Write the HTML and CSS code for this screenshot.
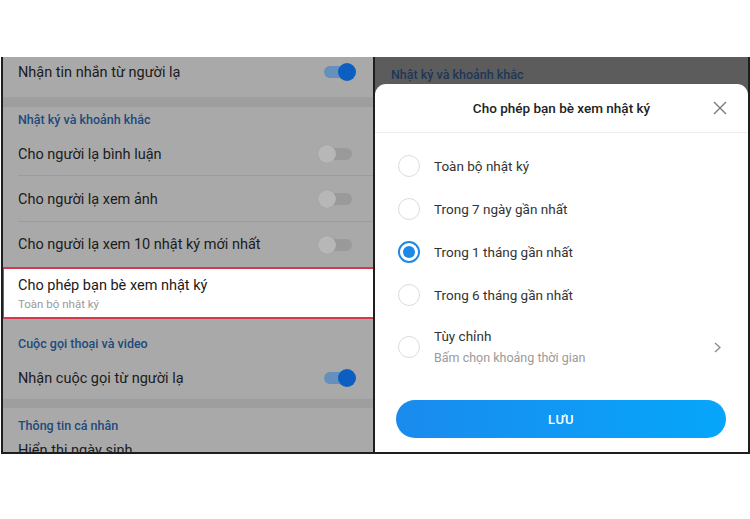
FILE: index.html
```html
<!DOCTYPE html>
<html lang="vi">
<head>
<meta charset="utf-8">
<title>Cho phép bạn bè xem nhật ký</title>
<link rel="stylesheet" href="styles.css">
</head>
<body>
<div class="frame">
  <section class="left">
    <div class="row h40 first">
      <span class="label">Nhận tin nhắn từ người lạ</span>
      <span class="toggle on"><i></i></span>
    </div>
    <div class="band"></div>
    <div class="head h25">Nhật ký và khoảnh khắc</div>
    <div class="row h44 sep">
      <span class="label">Cho người lạ bình luận</span>
      <span class="toggle off"><i></i></span>
    </div>
    <div class="row h46 sep">
      <span class="label">Cho người lạ xem ảnh</span>
      <span class="toggle off"><i></i></span>
    </div>
    <div class="row h45">
      <span class="label">Cho người lạ xem 10 nhật ký mới nhất</span>
      <span class="toggle off"><i></i></span>
    </div>
    <div class="highlight">
      <span class="label">Cho phép bạn bè xem nhật ký</span>
      <span class="sub">Toàn bộ nhật ký</span>
    </div>
    <div class="head call">Cuộc gọi thoại và video</div>
    <div class="row h42">
      <span class="label">Nhận cuộc gọi từ người lạ</span>
      <span class="toggle on"><i></i></span>
    </div>
    <div class="band b9"></div>
    <div class="head info">Thông tin cá nhân</div>
    <div class="row last">
      <span class="label">Hiển thị ngày sinh</span>
    </div>
  </section>
  <section class="right">
    <div class="dim-head">Nhật ký và khoảnh khắc</div>
    <div class="sheet">
      <div class="sheet-head">
        <span></span>
        <span class="title">Cho phép bạn bè xem nhật ký</span>
        <svg class="close" width="14" height="14" viewBox="0 0 14 14"><path d="M1 1 L13 13 M13 1 L1 13" stroke="#7a7a7a" stroke-width="1.4" fill="none"/></svg>
      </div>
      <div class="options">
        <div class="opt"><span class="radio"></span><span class="otext">Toàn bộ nhật ký</span></div>
        <div class="opt"><span class="radio"></span><span class="otext">Trong 7 ngày gần nhất</span></div>
        <div class="opt"><span class="radio checked"></span><span class="otext">Trong 1 tháng gần nhất</span></div>
        <div class="opt"><span class="radio"></span><span class="otext">Trong 6 tháng gần nhất</span></div>
        <div class="opt custom">
          <span class="radio"></span>
          <span class="ctext"><span class="otext">Tùy chỉnh</span><span class="osub">Bấm chọn khoảng thời gian</span></span>
          <svg class="chev" width="7" height="11" viewBox="0 0 7 11"><path d="M1 1 L6 5.5 L1 10" stroke="#8a8a8a" stroke-width="1.3" fill="none"/></svg>
        </div>
      </div>
      <button class="save">LƯU</button>
    </div>
  </section>
</div>
</body>
</html>
```
FILE: styles.css
```css
* { box-sizing: border-box; }
html, body { margin: 0; padding: 0; background: #fff; }
body { width: 750px; height: 519px; overflow: hidden; font-family: Roboto, "Noto Sans", sans-serif; }

.frame {
  margin-top: 57px;
  margin-left: 1px;
  width: 749px;
  height: 397px;
  display: flex;
  border-left: 2px solid #1e1e1e;
  border-right: 2px solid #1e1e1e;
  border-bottom: 2px solid #1e1e1e;
}

.left {
  width: 372px;
  flex: none;
  background: #a9a9a9;
  border-right: 2px solid #1e1e1e;
  overflow: hidden;
  display: flex;
  flex-direction: column;
}

.row {
  display: flex;
  align-items: center;
  justify-content: space-between;
  padding: 0 19px 0 15px;
  flex: none;
  position: relative;
}
.h40 { height: 40px; padding-bottom: 10px; }
.h44 { height: 44px; }
.h46 { height: 46px; }
.h45 { height: 45px; }
.h42 { height: 42px; }
.row.sep::after {
  content: "";
  position: absolute;
  left: 15px; right: 0; bottom: 0;
  height: 1px;
  background: #9c9c9c;
}
.row.last { height: 20px; align-items: flex-start; padding-top: 1px; }

.label { font-size: 14.5px; color: #1b1b1b; white-space: nowrap; }

.band { height: 10px; background: #9e9e9e; flex: none; }
.band.b9 { height: 9px; }

.head {
  flex: none;
  padding-left: 15px;
  font-size: 12.5px;
  font-weight: 500;
  color: #214a7c;
  display: flex;
  align-items: center;
}
.h25 { height: 25px; }
.head.call { height: 38px; padding-top: 10px; }
.head.info { height: 33px; padding-top: 2px; }

.highlight {
  flex: none;
  height: 52px;
  margin-left: -1px;
  margin-right: -2px;
  background: #fff;
  border: 2px solid #d33a50;
  padding: 7px 0 0 14px;
  display: flex;
  flex-direction: column;
}
.highlight .label { line-height: 20px; }
.highlight .sub { font-size: 11.5px; color: #9a9a9a; line-height: 14px; margin-top: 1px; }

.toggle { position: relative; width: 34px; height: 18px; flex: none; display: block; }
.toggle::before {
  content: "";
  position: absolute;
  top: 3px; height: 12px;
  border-radius: 6px;
}
.toggle i { position: absolute; top: 0; width: 18px; height: 18px; border-radius: 50%; }
.toggle.on { margin-right: -2px; }
.toggle.on::before { left: 2px; right: 4px; background: #6590bb; }
.toggle.on i { right: 0; background: #0c5ec2; }
.toggle.off { margin-right: 2px; }
.toggle.off::before { left: 6px; right: 0; background: #9a9a9a; }
.toggle.off i { left: 0; background: #b7b7b7; box-shadow: 0 0 1px rgba(0,0,0,0.15); }

.right {
  flex: 1;
  background: #5c5c5c;
  display: flex;
  flex-direction: column;
  overflow: hidden;
}
.dim-head {
  flex: none;
  height: 27px;
  padding: 10px 0 0 16px;
  font-size: 12.5px;
  font-weight: 500;
  line-height: 16px;
  color: #1c3757;
}
.sheet {
  flex: 1;
  background: #fff;
  border-radius: 11px 11px 0 0;
  display: flex;
  flex-direction: column;
}
.sheet-head {
  height: 49px;
  flex: none;
  display: grid;
  grid-template-columns: 1fr auto 1fr;
  align-items: center;
  border-bottom: 1px solid #ececec;
}
.title { font-size: 13.5px; font-weight: 500; color: #222; }
.close { justify-self: end; margin-right: 21px; }

.options { padding-top: 11px; }
.opt {
  height: 43px;
  display: flex;
  align-items: center;
  padding: 0 27px 0 23px;
}
.radio {
  width: 22px; height: 22px;
  border-radius: 50%;
  border: 1.5px solid #dcdcdc;
  flex: none;
  margin-right: 14px;
  position: relative;
}
.radio.checked { border: 2px solid #1e88e5; }
.radio.checked::after {
  content: "";
  position: absolute;
  left: 3px; top: 3px;
  width: 12px; height: 12px;
  border-radius: 50%;
  background: #1e88e5;
}
.otext { font-size: 13.5px; color: #333; }
.opt.custom { height: 62px; }
.ctext { flex: 1; display: flex; flex-direction: column; margin-top: -2px; }
.ctext .otext { line-height: 20px; }
.osub { font-size: 12.5px; color: #9a9a9a; line-height: 18px; margin-top: 3px; }
.chev { flex: none; }

.save {
  margin: 22px 22px 0 21px;
  height: 38px;
  border: none;
  border-radius: 19px;
  background: linear-gradient(90deg, #1a8bee 0%, #06a6fb 100%);
  color: #fff;
  font-family: Roboto, "Noto Sans", sans-serif;
  font-size: 13px;
  font-weight: 500;
  letter-spacing: 0.5px;
  padding: 0;
}
```
